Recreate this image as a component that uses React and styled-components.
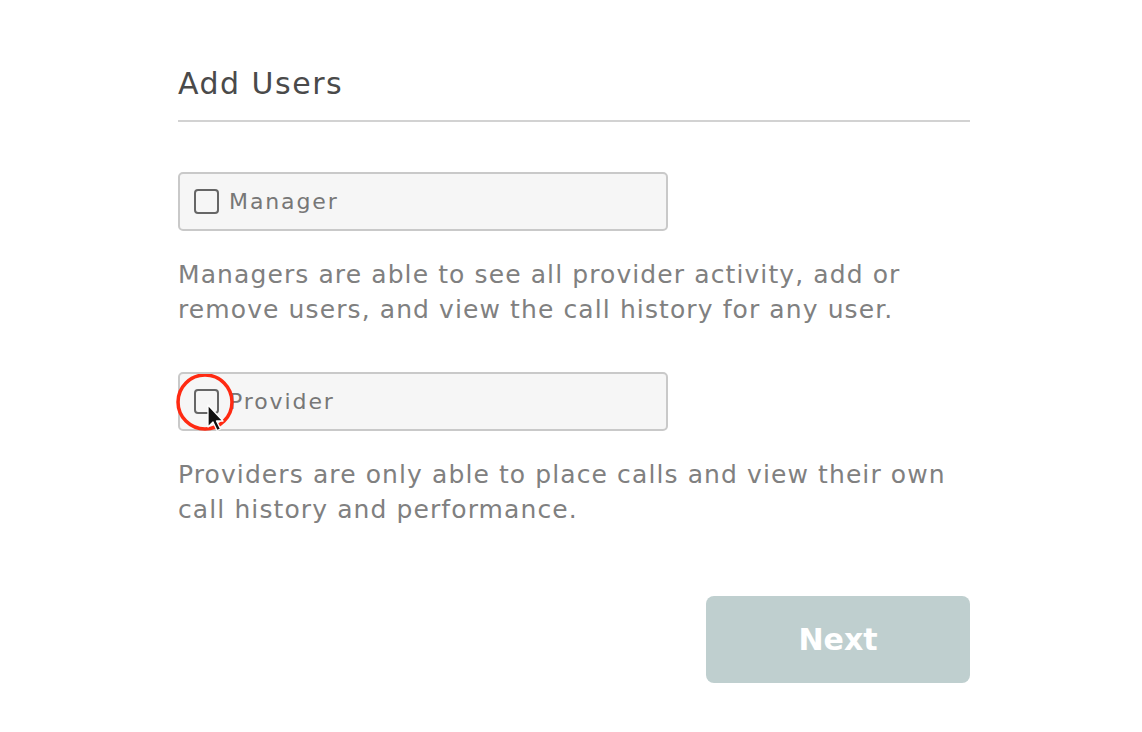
import React from "react";
import styled, { createGlobalStyle } from "styled-components";

const GlobalStyle = createGlobalStyle`
  html, body {
    margin: 0;
    padding: 0;
    background: #ffffff;
  }
  body {
    font-family: "DejaVu Sans", "Noto Sans", sans-serif;
  }
`;

const Page = styled.div`
  width: 1142px;
  height: 732px;
  overflow: hidden;
  position: relative;
`;

const Form = styled.div`
  width: 792px;
  margin-left: 178px;
  padding-top: 66px;
  display: flex;
  flex-direction: column;
`;

const Title = styled.h1`
  margin: 0;
  font-size: 30px;
  line-height: 36px;
  font-weight: 500;
  letter-spacing: 1.5px;
  color: #4a4a4a;
  padding-bottom: 18px;
  border-bottom: 2px solid #d2d2d2;
`;

const RoleBox = styled.label`
  margin-top: ${(p) => p.top}px;
  width: 490px;
  height: 59px;
  box-sizing: border-box;
  border: 2px solid #c9c9c9;
  border-radius: 5px;
  background: #f6f6f6;
  display: flex;
  align-items: center;
  padding-left: 14px;
  gap: 10px;
  cursor: pointer;
`;

const Box = styled.span`
  width: 25px;
  height: 25px;
  box-sizing: border-box;
  border: 2px solid #666666;
  border-radius: 4px;
  background: #f6f6f6;
  flex: none;
`;

const RoleName = styled.span`
  font-size: 22px;
  letter-spacing: 1.9px;
  color: #777777;
`;

const Description = styled.p`
  margin: 26px 0 0;
  font-size: 25px;
  line-height: 35px;
  letter-spacing: 1.1px;
  color: #808080;
`;

const Actions = styled.div`
  display: flex;
  justify-content: flex-end;
  margin-top: 69px;
`;

const NextButton = styled.button`
  width: 264px;
  height: 87px;
  border: none;
  border-radius: 8px;
  background: #bfcfcf;
  color: #ffffff;
  font-family: inherit;
  font-size: 30px;
  font-weight: 700;
`;

const Pointer = styled.svg`
  position: absolute;
  left: 176px;
  top: 374px;
`;

const roles = [
  {
    name: "Manager",
    text: "Managers are able to see all provider activity, add or remove users, and view the call history for any user.",
    top: 50,
  },
  {
    name: "Provider",
    text: "Providers are only able to place calls and view their own call history and performance.",
    top: 45,
  },
];

export default function App() {
  return (
    <Page>
      <GlobalStyle />
      <Form>
        <Title>Add Users</Title>
        {roles.map((r) => (
          <React.Fragment key={r.name}>
            <RoleBox top={r.top}>
              <Box />
              <RoleName>{r.name}</RoleName>
            </RoleBox>
            <Description>{r.text}</Description>
          </React.Fragment>
        ))}
        <Actions>
          <NextButton>Next</NextButton>
        </Actions>
      </Form>
      <Pointer width="64" height="64" viewBox="0 0 64 64">
        <circle cx="29" cy="28" r="27" fill="none" stroke="#ff2a12" strokeWidth="3.5" />
        <path
          d="M32 31 L32 53 L37 48 L41 56.5 L44.5 55 L40.5 47 L47 47 Z"
          fill="#111"
          stroke="#fff"
          strokeWidth="1.3"
          strokeLinejoin="round"
        />
      </Pointer>
    </Page>
  );
}
